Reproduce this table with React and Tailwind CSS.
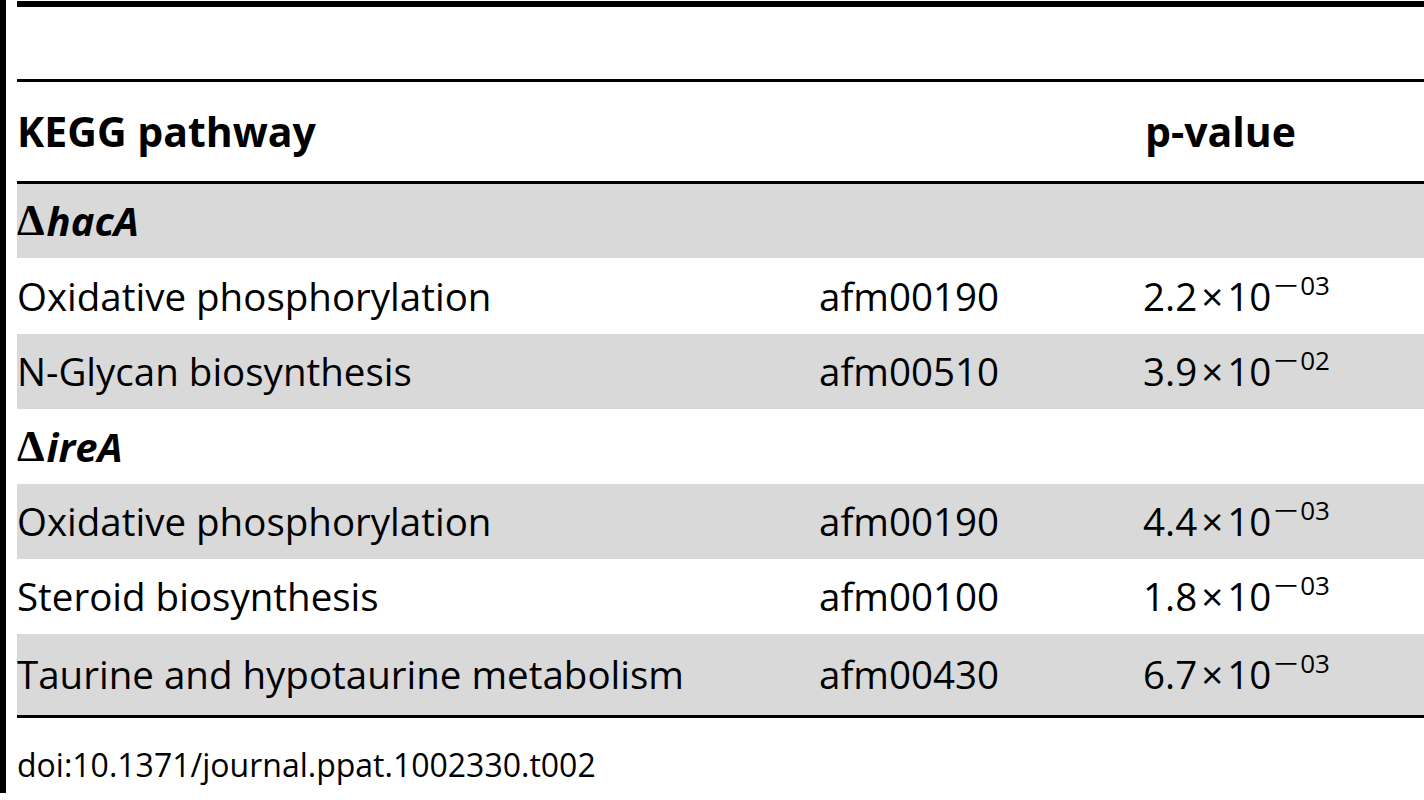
import React from "react";

const font = { fontFamily: '"Open Sans", "Noto Sans", sans-serif' };

function PVal({ m, e }) {
  return (
    <span className="whitespace-nowrap">
      {m}
      <span className="mx-[4px]">×</span>10
      <span className="relative -top-[16px] text-[26px] ml-[1px]">
        <span className="inline-block w-[28px] text-center">
          <span className="inline-block scale-x-[1.7]">−</span>
        </span>
        {e}
      </span>
    </span>
  );
}

function Row({ gray, h, name, id, m, e }) {
  return (
    <div
      className={`grid grid-cols-[802px_324px_1fr] items-center ${h} ${gray ? "bg-[#d9d9d9]" : "bg-white"}`}
    >
      <div>{name}</div>
      <div>{id}</div>
      <div>
        <PVal m={m} e={e} />
      </div>
    </div>
  );
}

function Group({ gray, h, label }) {
  return (
    <div className={`flex items-center ${h} ${gray ? "bg-[#d9d9d9]" : "bg-white"}`}>
      <span className="font-bold text-[44px] mr-[2px]" style={{ fontFamily: '"Liberation Serif", "DejaVu Serif", serif' }}>Δ</span>
      <span className="font-bold italic text-[40px]">{label}</span>
    </div>
  );
}

export default function App() {
  return (
    <div className="flex min-h-[800px] w-[1424px] bg-white text-black text-[38.5px] leading-none" style={font}>
      <div className="w-[6px] h-[793px] bg-black shrink-0" />
      <div className="flex-1 pl-[11px] pt-[1px]">
        <div className="h-[6px] bg-black" />
        <div className="h-[72px]" />
        <div className="h-[3px] bg-black" />
        <div className="grid grid-cols-[1128px_1fr] items-center h-[99px] font-bold text-[41px]">
          <div>KEGG pathway</div>
          <div>p-value</div>
        </div>
        <div className="h-[3px] bg-black" />
        <Group gray h="h-[74px]" label="hacA" />
        <Row h="h-[76px]" name="Oxidative phosphorylation" id="afm00190" m="2.2" e="03" />
        <Row gray h="h-[75px]" name="N-Glycan biosynthesis" id="afm00510" m="3.9" e="02" />
        <Group h="h-[75px]" label="ireA" />
        <Row gray h="h-[75px]" name="Oxidative phosphorylation" id="afm00190" m="4.4" e="03" />
        <Row h="h-[75px]" name="Steroid biosynthesis" id="afm00100" m="1.8" e="03" />
        <Row gray h="h-[81px]" name="Taurine and hypotaurine metabolism" id="afm00430" m="6.7" e="03" />
        <div className="h-[3px] bg-black" />
        <div className="pt-[31px] text-[32px]">doi:10.1371/journal.ppat.1002330.t002</div>
      </div>
    </div>
  );
}
